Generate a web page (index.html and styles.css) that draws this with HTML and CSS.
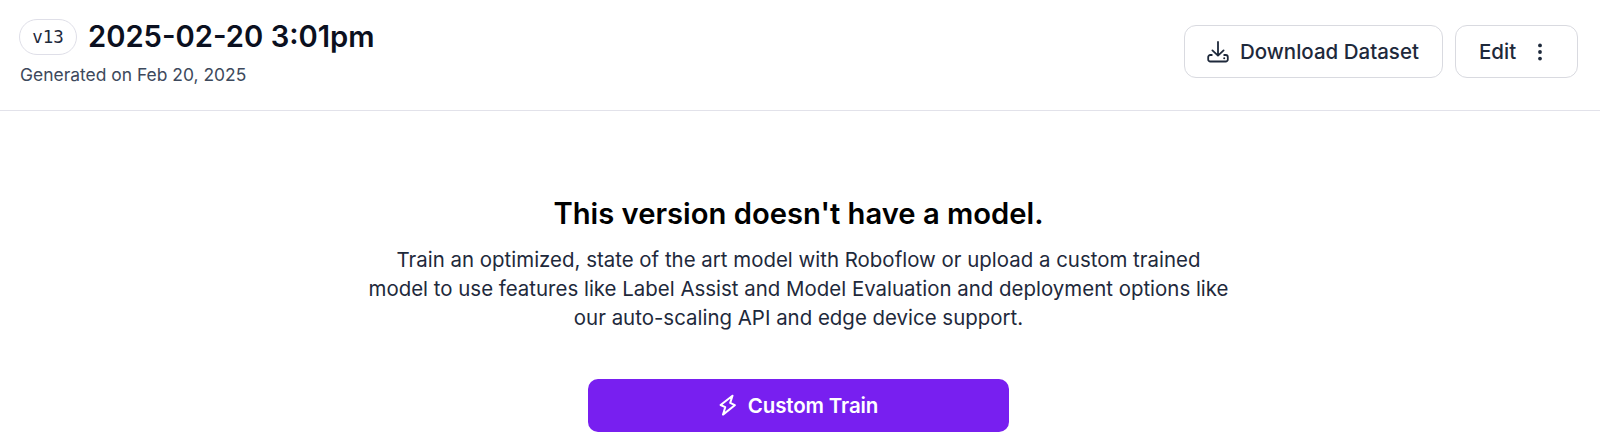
FILE: index.html
```
<!DOCTYPE html>
<html lang="en">
<head>
    <title>Dataset version</title>
    <meta charset="UTF-8">
    <meta name="viewport" content="width=device-width, initial-scale=1.0">
    <link rel="stylesheet" href="styles.css">
</head>
<body>
    <header class="header">
        <div class="version">
            <div class="version-title">
                <span class="badge">v13</span>
                <h1>2025-02-20 3:01pm</h1>
            </div>
            <p class="generated">Generated on Feb 20, 2025</p>
        </div>
        <div class="actions">
            <button type="button" class="btn">
                <svg class="icon-download" viewBox="0 0 22 22">
                    <path d="M11 1v13.5M5.4 9.4l5.6 5.3 5.6-5.3"/>
                    <path d="M4.8 14H3.3a2.1 2.1 0 0 0-2.1 2.1v2.3a2.1 2.1 0 0 0 2.1 2.1h15.4a2.1 2.1 0 0 0 2.1-2.1v-2.3a2.1 2.1 0 0 0-2.1-2.1h-1.5"/>
                    <circle cx="17.2" cy="17.2" r="1"/>
                </svg>
                <span>Download Dataset</span>
            </button>
            <button type="button" class="btn btn-edit">
                <span>Edit</span>
                <svg class="icon-dots" viewBox="0 0 6 18">
                    <circle cx="3" cy="2.4" r="1.9"/>
                    <circle cx="3" cy="9" r="1.9"/>
                    <circle cx="3" cy="15.6" r="1.9"/>
                </svg>
            </button>
        </div>
    </header>

    <main class="empty">
        <h2>This version doesn't have a model.</h2>
        <p>Train an optimized, state of the art model with Roboflow or upload a custom trained model to use features like Label Assist and Model Evaluation and deployment options like our auto-scaling API and edge device support.</p>
        <button type="button" class="btn-train">
            <svg class="icon-bolt" viewBox="0 0 17 22">
                <path d="M13.5 1.8L1.6 11l4.6 2.2L4 20.6l11.8-9.4-4.6-2.3z"/>
            </svg>
            <span>Custom Train</span>
        </button>
    </main>
</body>
</html>
```

FILE: styles.css
```
* {
    margin: 0;
    padding: 0;
    box-sizing: border-box;
}

body {
    background: #fff;
    color: #1e293b;
    font-family: Inter, sans-serif;
}

.header {
    display: flex;
    justify-content: space-between;
    height: 111px;
    padding: 19px 22px 0 19px;
    border-bottom: 1px solid #e2e2ea;
}

.version-title {
    display: flex;
    align-items: center;
    gap: 11px;
    height: 36px;
}

.badge {
    width: 58px;
    height: 36px;
    border: 1px solid #dfdfe8;
    border-radius: 18px;
    font-family: "DejaVu Sans Mono", monospace;
    font-size: 17.5px;
    line-height: 34px;
    text-align: center;
}

h1 {
    color: #0b1020;
    font-size: 29.2px;
    font-weight: 600;
    line-height: 36px;
}

.generated {
    margin-top: 7px;
    padding-left: 1px;
    color: #3d495c;
    font-size: 17.45px;
    line-height: 26px;
}

.actions {
    display: flex;
    gap: 12px;
    margin-top: 6px;
}

.btn {
    display: flex;
    align-items: center;
    gap: 11px;
    width: 259px;
    height: 53px;
    padding: 0 22px;
    border: 1px solid #d9dae0;
    border-radius: 12px;
    background: #fff;
    color: #1e293b;
    font-family: inherit;
    font-size: 20.5px;
    font-weight: 500;
    white-space: nowrap;
    cursor: pointer;
}

.btn-edit {
    gap: 21px;
    width: 123px;
    padding: 0 23px;
}

.icon-download,
.icon-bolt {
    fill: none;
    stroke: currentColor;
    stroke-width: 1.8;
    stroke-linecap: round;
    stroke-linejoin: round;
}

.icon-bolt {
    width: 17px;
    height: 22px;
    stroke-width: 2;
}

.icon-download {
    width: 22px;
    height: 22px;
}

.icon-download circle,
.icon-dots {
    fill: currentColor;
    stroke: none;
}

.icon-dots {
    width: 6px;
    height: 18px;
}

.empty {
    display: flex;
    flex-direction: column;
    align-items: center;
    padding: 85px 3px 0 0;
    text-align: center;
}

h2 {
    color: #000;
    font-size: 29.2px;
    font-weight: 600;
    line-height: 36px;
}

.empty p {
    width: 864px;
    margin-top: 13px;
    font-size: 20.44px;
    line-height: 29.2px;
}

.btn-train {
    display: flex;
    align-items: center;
    justify-content: center;
    gap: 12px;
    width: 421px;
    height: 53px;
    margin-top: 46px;
    border: none;
    border-radius: 10px;
    background: #781ff0;
    color: #fff;
    font-family: inherit;
    font-size: 20.5px;
    font-weight: 600;
    letter-spacing: -0.15px;
    cursor: pointer;
}
```
